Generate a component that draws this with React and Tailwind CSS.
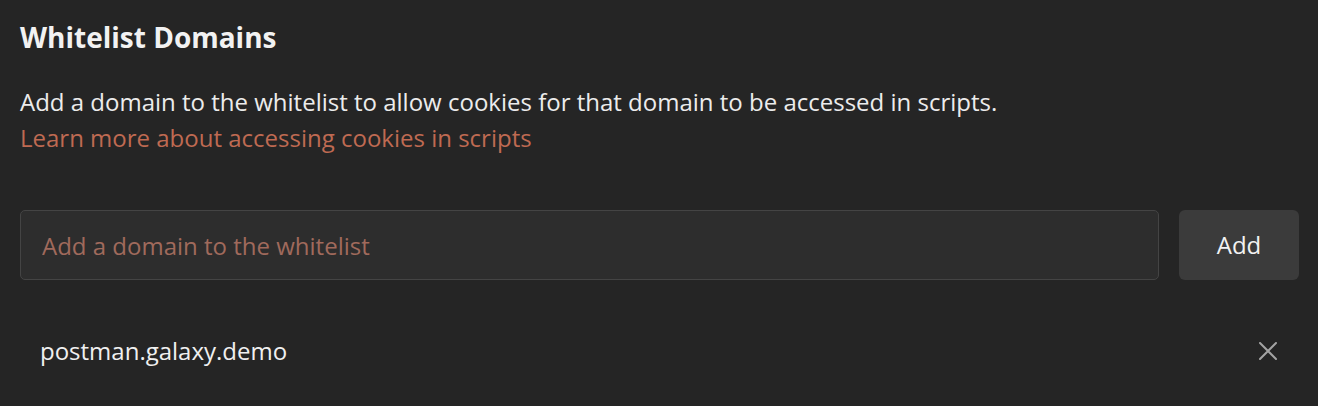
import React from "react";

export default function App() {
  return (
    <div className="w-[1318px] h-[406px] bg-[#252525] pl-5 pr-[19px] pt-[19px] text-[#f0f0f0]" style={{ fontFamily: '"Open Sans", sans-serif' }}>
      <h2 className="text-[28px] font-bold leading-[36px] text-[#f2f2f2]">Whitelist Domains</h2>
      <div className="mt-[29px] text-[24px] leading-[36px]">
        <p className="text-[#ececec]">Add a domain to the whitelist to allow cookies for that domain to be accessed in scripts.</p>
        <a className="text-[#bf6a52] block">Learn more about accessing cookies in scripts</a>
      </div>
      <div className="mt-[54px] flex gap-5">
        <input
          className="flex-1 h-[70px] rounded-[5px] bg-[#2d2d2d] border border-[#444444] px-[21px] text-[24px] placeholder:text-[#a06a5c] outline-none"
          placeholder="Add a domain to the whitelist"
        />
        <button className="w-[120px] h-[70px] rounded-[6px] bg-[#3b3b3b] text-[24px] text-[#f2f2f2]">Add</button>
      </div>
      <div className="mt-[53px] h-[36px] flex items-center justify-between pl-5 pr-[22px]">
        <span className="text-[24px] leading-[36px] text-[#f0f0f0]">postman.galaxy.demo</span>
        <svg width="18" height="18" viewBox="0 0 18 18" stroke="#a3a3a3" strokeWidth="2" strokeLinecap="round">
          <path d="M1 1L17 17M17 1L1 17" />
        </svg>
      </div>
    </div>
  );
}
